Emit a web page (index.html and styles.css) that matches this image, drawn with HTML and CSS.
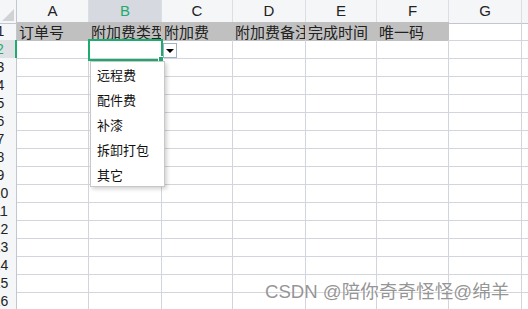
FILE: index.html
```html
<!DOCTYPE html>
<html lang="zh-CN">
<head>
  <meta charset="UTF-8">
  <title>附加费</title>
  <link rel="stylesheet" href="styles.css">
</head>
<body>
  <div class="page">
    <div class="sheet">
      <div class="row head">
        <div class="corner"><span class="tri"></span></div>
        <div class="col">A</div>
        <div class="col active">B</div>
        <div class="col">C</div>
        <div class="col">D</div>
        <div class="col">E</div>
        <div class="col">F</div>
        <div class="col">G</div>
        <div class="col"></div>
      </div>
      <div class="row">
        <div class="num">1</div>
        <div class="cell fill">订单号</div>
        <div class="cell fill">附加费类型</div>
        <div class="cell fill">附加费</div>
        <div class="cell fill">附加费备注</div>
        <div class="cell fill">完成时间</div>
        <div class="cell fill">唯一码</div>
        <div class="cell"></div>
        <div class="cell"></div>
      </div>
      <div class="row">
        <div class="num active">2</div>
        <div class="cell"></div><div class="cell"></div><div class="cell"></div><div class="cell"></div>
        <div class="cell"></div><div class="cell"></div><div class="cell"></div><div class="cell"></div>
      </div>
      <div class="row">
        <div class="num">3</div>
        <div class="cell"></div><div class="cell"></div><div class="cell"></div><div class="cell"></div>
        <div class="cell"></div><div class="cell"></div><div class="cell"></div><div class="cell"></div>
      </div>
      <div class="row">
        <div class="num">4</div>
        <div class="cell"></div><div class="cell"></div><div class="cell"></div><div class="cell"></div>
        <div class="cell"></div><div class="cell"></div><div class="cell"></div><div class="cell"></div>
      </div>
      <div class="row">
        <div class="num">5</div>
        <div class="cell"></div><div class="cell"></div><div class="cell"></div><div class="cell"></div>
        <div class="cell"></div><div class="cell"></div><div class="cell"></div><div class="cell"></div>
      </div>
      <div class="row">
        <div class="num">6</div>
        <div class="cell"></div><div class="cell"></div><div class="cell"></div><div class="cell"></div>
        <div class="cell"></div><div class="cell"></div><div class="cell"></div><div class="cell"></div>
      </div>
      <div class="row">
        <div class="num">7</div>
        <div class="cell"></div><div class="cell"></div><div class="cell"></div><div class="cell"></div>
        <div class="cell"></div><div class="cell"></div><div class="cell"></div><div class="cell"></div>
      </div>
      <div class="row">
        <div class="num">8</div>
        <div class="cell"></div><div class="cell"></div><div class="cell"></div><div class="cell"></div>
        <div class="cell"></div><div class="cell"></div><div class="cell"></div><div class="cell"></div>
      </div>
      <div class="row">
        <div class="num">9</div>
        <div class="cell"></div><div class="cell"></div><div class="cell"></div><div class="cell"></div>
        <div class="cell"></div><div class="cell"></div><div class="cell"></div><div class="cell"></div>
      </div>
      <div class="row">
        <div class="num">10</div>
        <div class="cell"></div><div class="cell"></div><div class="cell"></div><div class="cell"></div>
        <div class="cell"></div><div class="cell"></div><div class="cell"></div><div class="cell"></div>
      </div>
      <div class="row">
        <div class="num">11</div>
        <div class="cell"></div><div class="cell"></div><div class="cell"></div><div class="cell"></div>
        <div class="cell"></div><div class="cell"></div><div class="cell"></div><div class="cell"></div>
      </div>
      <div class="row">
        <div class="num">12</div>
        <div class="cell"></div><div class="cell"></div><div class="cell"></div><div class="cell"></div>
        <div class="cell"></div><div class="cell"></div><div class="cell"></div><div class="cell"></div>
      </div>
      <div class="row">
        <div class="num">13</div>
        <div class="cell"></div><div class="cell"></div><div class="cell"></div><div class="cell"></div>
        <div class="cell"></div><div class="cell"></div><div class="cell"></div><div class="cell"></div>
      </div>
      <div class="row">
        <div class="num">14</div>
        <div class="cell"></div><div class="cell"></div><div class="cell"></div><div class="cell"></div>
        <div class="cell"></div><div class="cell"></div><div class="cell"></div><div class="cell"></div>
      </div>
      <div class="row">
        <div class="num">15</div>
        <div class="cell"></div><div class="cell"></div><div class="cell"></div><div class="cell"></div>
        <div class="cell"></div><div class="cell"></div><div class="cell"></div><div class="cell"></div>
      </div>
      <div class="row">
        <div class="num">16</div>
        <div class="cell"></div><div class="cell"></div><div class="cell"></div><div class="cell"></div>
        <div class="cell"></div><div class="cell"></div><div class="cell"></div><div class="cell"></div>
      </div>
    </div>

    <!-- selected cell B2 with its validation list -->
    <div class="selection"><span class="handle"></span></div>
    <div class="drop-btn"><span class="arrow"></span></div>
    <ul class="list">
      <li>远程费</li>
      <li>配件费</li>
      <li>补漆</li>
      <li>拆卸打包</li>
      <li>其它</li>
    </ul>

    <div class="watermark">CSDN @陪你奇奇怪怪@绵羊</div>
  </div>
</body>
</html>
```

FILE: styles.css
```css
body {
  margin: 0;
  background: #fff;
  overflow: hidden;
  font-family: "Liberation Sans", "Noto Sans CJK SC", sans-serif;
  color: #222;
}

.page {
  position: relative;
  width: 528px;
  height: 309px;
  overflow: hidden;
}

.sheet {
  margin-left: -15px;
  width: 560px;
}

.row {
  display: grid;
  grid-template-columns: 32px 72px 73px 71px 73px 71px 72px 73px 33px;
  height: 18px;
}

.row.head {
  height: 22px;
}

/* headers */
.corner {
  position: relative;
  background: #f5f6f8;
  border-right: 1px solid #c3c6ce;
  border-bottom: 1px solid #c3c6ce;
}

.tri {
  position: absolute;
  right: 2px;
  bottom: 2px;
  width: 0;
  height: 0;
  border-left: 12px solid transparent;
  border-bottom: 12px solid #d0d2d6;
}

.col {
  background: #f5f6f8;
  border-right: 1px solid #dcdee3;
  border-bottom: 1px solid #c3c6ce;
  text-align: center;
  font-size: 15px;
  line-height: 22px;
}

.col.active {
  background: #d6d9df;
  border-bottom: 2px solid #1faa6e;
  color: #1faa6e;
}

.num {
  background: #f5f6f8;
  border-right: 1px solid #c3c6ce;
  border-bottom: 1px solid #d8dadf;
  text-align: center;
  font-size: 14px;
  line-height: 18px;
}

.num.active {
  background: #dfe1e5;
  border-right: 2px solid #1faa6e;
  color: #1faa6e;
}

/* cells */
.cell {
  border-right: 1px solid #d3d5dc;
  border-bottom: 1px solid #d3d5dc;
  padding-left: 2px;
  font-family: "Noto Sans CJK SC", sans-serif;
  font-size: 15px;
  line-height: 19px;
  white-space: nowrap;
  overflow: hidden;
}

.cell.fill {
  background: #c0c0c0;
  border-color: #c0c0c0;
}

/* overlays */
.selection {
  position: absolute;
  left: 88px;
  top: 39px;
  width: 75px;
  height: 22px;
  box-sizing: border-box;
  border: 2px solid #1faa6e;
}

.handle {
  position: absolute;
  right: -3px;
  bottom: -3px;
  width: 4px;
  height: 4px;
  background: #1faa6e;
  border: 1px solid #fff;
}

.drop-btn {
  position: absolute;
  left: 163px;
  top: 43px;
  width: 14px;
  height: 15px;
  box-sizing: border-box;
  border: 1px solid #9fb2c8;
  background: #fff;
  display: flex;
  align-items: center;
  justify-content: center;
}

.arrow {
  width: 0;
  height: 0;
  border-left: 4px solid transparent;
  border-right: 4px solid transparent;
  border-top: 4px solid #000;
}

.list {
  position: absolute;
  left: 90px;
  top: 61px;
  width: 75px;
  height: 126px;
  box-sizing: border-box;
  margin: 0;
  padding: 0;
  list-style: none;
  background: #fff;
  border: 1px solid #c8c8c8;
  box-shadow: 2px 2px 4px rgba(0, 0, 0, 0.18);
}

.list li {
  height: 25px;
  line-height: 25px;
  padding-left: 6px;
  font-family: "Noto Sans CJK SC", sans-serif;
  font-size: 13px;
  color: #111;
}

.watermark {
  position: absolute;
  left: 265px;
  top: 276px;
  font-family: "Liberation Sans", "Noto Sans CJK SC", sans-serif;
  font-size: 18.6px;
  color: rgba(130, 130, 130, 0.85);
  text-shadow: 0 0 2px #fff;
  white-space: nowrap;
}
```
